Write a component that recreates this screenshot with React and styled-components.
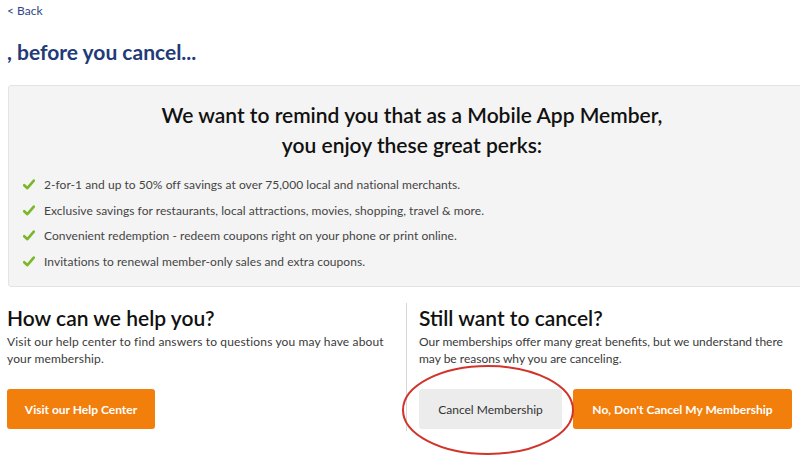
import React from "react";
import styled, { createGlobalStyle } from "styled-components";

const Global = createGlobalStyle`
  html, body { margin: 0; padding: 0; background: #fff; overflow: hidden; }
  body { font-family: Lato, "Open Sans", "Liberation Sans", sans-serif; }
  * { box-sizing: border-box; }
`;

const Page = styled.div`
  position: relative;
  width: 800px;
  height: 456px;
  overflow: hidden;
`;

const BackLink = styled.a`
  display: block;
  padding: 3px 0 0 7px;
  font-size: 12px;
  line-height: 16px;
  color: #2f4584;
  text-decoration: none;
`;

const Title = styled.h1`
  margin: 20px 0 0 7px;
  font-size: 21px;
  line-height: 26px;
  font-weight: 700;
  color: #233a78;
`;

const Panel = styled.section`
  margin: 20px -12px 0 8px;
  background: #f4f4f4;
  border: 1px solid #e3e3e3;
  border-radius: 3px;
  padding: 14px 0 16px 14px;
`;

const Headline = styled.h2`
  margin: 0 0 16px;
  padding-right: 10px;
  text-align: center;
  font-size: 21px;
  line-height: 30px;
  font-weight: 600;
  color: #111;
`;

const Perks = styled.ul`
  list-style: none;
  margin: 0;
  padding: 0;
  display: flex;
  flex-direction: column;
  gap: 8px;
`;

const Perk = styled.li`
  display: flex;
  align-items: center;
  gap: 9px;
  font-size: 12px;
  line-height: 17.5px;
  letter-spacing: 0.05px;
  color: #444;
`;

const Check = () => (
  <svg width="12" height="11" viewBox="0 0 12 11" aria-hidden="true">
    <path d="M1.2 6.2 L4.4 9.2 L10.8 1.6" fill="none" stroke="#7ab829" strokeWidth="2.6" strokeLinecap="round" strokeLinejoin="round" />
  </svg>
);

const Columns = styled.div`
  display: grid;
  grid-template-columns: 399px 1fr;
  margin-top: 16px;
  padding-left: 7px;
`;

const Column = styled.div`
  padding: ${(p) => (p.$right ? "0 0 0 12px" : "0 20px 0 0")};
  border-left: ${(p) => (p.$right ? "1px solid #d8d8d8" : "none")};
  padding-top: 2px;
  padding-bottom: 2px;
`;

const ColTitle = styled.h3`
  margin: 0;
  font-size: 21px;
  line-height: 26px;
  font-weight: 600;
  color: #111;
`;

const ColText = styled.p`
  margin: 2px 0 0;
  font-size: 12px;
  line-height: 17px;
  letter-spacing: ${(p) => (p.$tight ? "0" : "0.15px")};
  color: #3a3a3a;
`;

const Buttons = styled.div`
  display: flex;
  gap: 11px;
  margin-top: 22px;
`;

const Button = styled.button`
  height: 40px;
  border: none;
  border-radius: 3px;
  padding: 0 12px;
  font-family: inherit;
  font-size: 12px;
  font-weight: ${(p) => (p.$secondary ? 400 : 700)};
  color: ${(p) => (p.$secondary ? "#333" : "#fff")};
  background: ${(p) => (p.$secondary ? "#ececec" : "#f27e0c")};
  cursor: pointer;
`;

const Circle = styled.svg`
  position: absolute;
  left: 398px;
  top: 362px;
  pointer-events: none;
`;

const perks = [
  "2-for-1 and up to 50% off savings at over 75,000 local and national merchants.",
  "Exclusive savings for restaurants, local attractions, movies, shopping, travel & more.",
  "Convenient redemption - redeem coupons right on your phone or print online.",
  "Invitations to renewal member-only sales and extra coupons.",
];

export default function App() {
  return (
    <Page>
      <Global />
      <BackLink href="#">&lt; Back</BackLink>
      <Title>, before you cancel...</Title>
      <Panel>
        <Headline>
          We want to remind you that as a Mobile App Member,
          <br />
          you enjoy these great perks:
        </Headline>
        <Perks>
          {perks.map((t) => (
            <Perk key={t}>
              <Check />
              {t}
            </Perk>
          ))}
        </Perks>
      </Panel>
      <Columns>
        <Column>
          <ColTitle>How can we help you?</ColTitle>
          <ColText>
            Visit our help center to find answers to questions you may have about your membership.
          </ColText>
          <Buttons>
            <Button style={{ width: 148 }}>Visit our Help Center</Button>
          </Buttons>
        </Column>
        <Column $right>
          <ColTitle>Still want to cancel?</ColTitle>
          <ColText $tight>
            Our memberships offer many great benefits, but we understand there may be reasons why you are canceling.
          </ColText>
          <Buttons>
            <Button $secondary style={{ width: 143 }}>Cancel Membership</Button>
            <Button style={{ width: 219 }}>No, Don't Cancel My Membership</Button>
          </Buttons>
        </Column>
      </Columns>
      <Circle width="180" height="96" viewBox="0 0 180 96">
        <ellipse cx="90" cy="48" rx="85" ry="44" fill="none" stroke="#d0342a" strokeWidth="2" />
      </Circle>
    </Page>
  );
}
